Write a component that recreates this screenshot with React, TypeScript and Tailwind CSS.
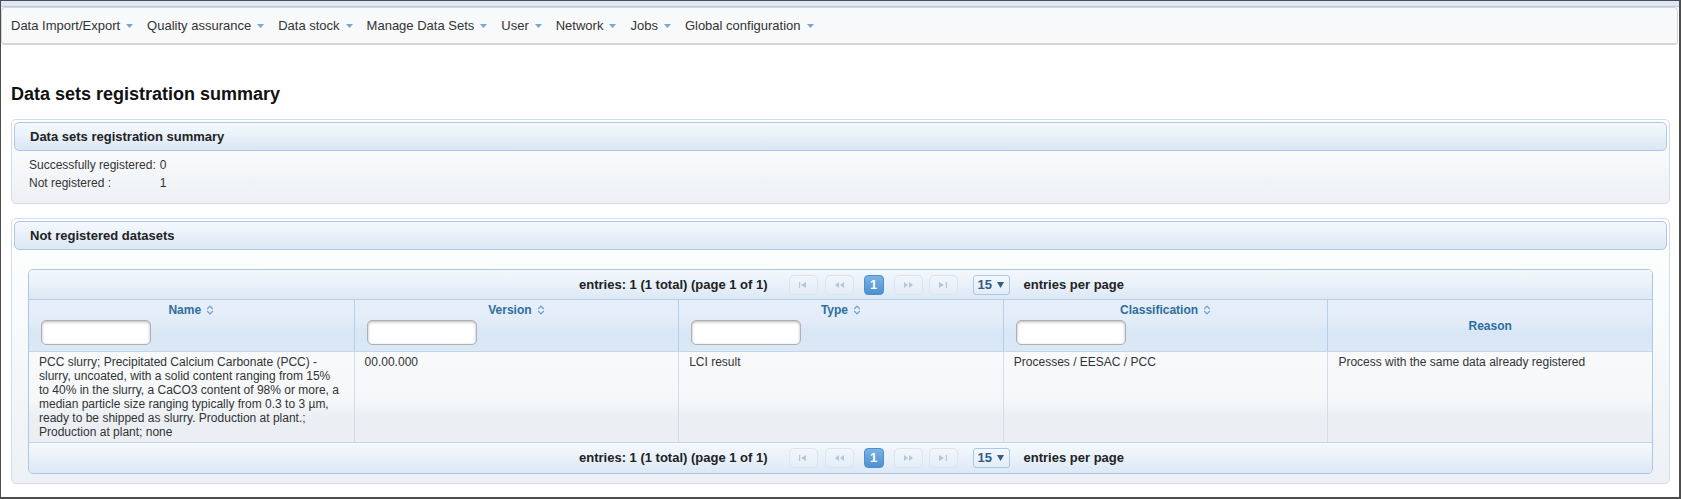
import React from 'react';

const menuItems = [
  'Data Import/Export',
  'Quality assurance',
  'Data stock',
  'Manage Data Sets',
  'User',
  'Network',
  'Jobs',
  'Global configuration',
];

const columns = [
  { label: 'Name', sortable: true },
  { label: 'Version', sortable: true },
  { label: 'Type', sortable: true },
  { label: 'Classification', sortable: true },
  { label: 'Reason', sortable: false },
];

const row = [
  'PCC slurry; Precipitated Calcium Carbonate (PCC) - slurry, uncoated, with a solid content ranging from 15% to 40% in the slurry, a CaCO3 content of 98% or more, a median particle size ranging typically from 0.3 to 3 µm, ready to be shipped as slurry. Production at plant.; Production at plant; none',
  '00.00.000',
  'LCI result',
  'Processes / EESAC / PCC',
  'Process with the same data already registered',
];

function Caret() {
  return (
    <svg width="7" height="4" viewBox="0 0 7 4" className="ml-[6px] mt-[1px]">
      <path d="M0 0h7L3.5 4z" fill="#7ba4cf" />
    </svg>
  );
}

function SortIcon() {
  return (
    <svg width="8" height="10" viewBox="0 0 8 10" className="ml-[5px]">
      <path d="M1.2 4 L4 1.2 L6.8 4 M1.2 6 L4 8.8 L6.8 6" fill="none" stroke="#6f9fd0" strokeWidth="1.2" />
    </svg>
  );
}

// paginator icons, drawn faint because the buttons are disabled
function SeekIcon({ kind }: { kind: 'first' | 'prev' | 'next' | 'end' }) {
  const paths: Record<string, string> = {
    first: 'M1 1h1.2v6H1z M8 1v6L3 4z',
    prev: 'M5 1v6L1 4z M10 1v6L6 4z',
    next: 'M1 1v6l4-3z M6 1v6l4-3z',
    end: 'M1 1v6l5-3z M7.8 1H9v6H7.8z',
  };
  return (
    <svg width="11" height="8" viewBox="0 0 11 8">
      <path d={paths[kind]} fill="#b3c7db" />
    </svg>
  );
}

function PageButton({ children, className = '' }: { children: React.ReactNode; className?: string }) {
  return (
    <div
      className={`h-[20px] w-[29px] flex items-center justify-center rounded-[5px] border border-[#d9e5f1] bg-[linear-gradient(to_bottom,#f1f6fb,#e4edf7)] ${className}`}
    >
      {children}
    </div>
  );
}

function Paginator({ bottom }: { bottom?: boolean }) {
  return (
    <div
      className={`flex items-center justify-center pl-[22px] bg-[linear-gradient(to_bottom,#f4f8fc_0%,#e9f1f9_50%,#dce8f5_100%)] ${
        bottom ? 'h-[31px] border-t border-[#c3d6ea]' : 'h-[29px]'
      }`}
    >
      <span className="text-[13px] font-bold text-[#222]">entries: 1 (1 total) (page 1 of 1)</span>
      <PageButton className="ml-[21px]">
        <SeekIcon kind="first" />
      </PageButton>
      <PageButton className="ml-[7px]">
        <SeekIcon kind="prev" />
      </PageButton>
      <div className="ml-[10px] h-[20px] w-[20px] flex items-center justify-center rounded-[4px] border border-[#4c8fcf] bg-[linear-gradient(to_bottom,#7ab3e6,#4d90d0)] text-[13px] font-bold text-white">
        1
      </div>
      <PageButton className="ml-[10px]">
        <SeekIcon kind="next" />
      </PageButton>
      <PageButton className="ml-[6px]">
        <SeekIcon kind="end" />
      </PageButton>
      <div className="ml-[15px] h-[20px] w-[37px] flex items-center pl-[4px] rounded-[3px] border border-[#a9c8e6] bg-[linear-gradient(to_bottom,#f4f8fc,#e2ecf7)]">
        <span className="text-[13px] font-bold text-[#2f5d8a]">15</span>
        <svg width="7" height="6" viewBox="0 0 7 6" className="ml-[5px]">
          <path d="M0 0h7L3.5 6z" fill="#2f5d8a" />
        </svg>
      </div>
      <span className="ml-[14px] text-[13px] font-bold text-[#222]">entries per page</span>
    </div>
  );
}

function PanelHeader({ title }: { title: string }) {
  return (
    <div className="h-[29px] flex items-center pl-[15px] rounded-[5px] border border-[#abc9e6] bg-[linear-gradient(to_bottom,#f5f9fd_0%,#e8f0f9_50%,#dbe7f5_100%)] text-[13px] font-bold text-[#222]">
      {title}
    </div>
  );
}

export default function App() {
  return (
    <div className="w-[1681px] h-[499px] overflow-hidden bg-white border-t border-l border-r-2 border-b-2 border-[#4d4d4d] font-['Liberation_Sans',Arial,sans-serif]">
      {/* top strip */}
      <div className="h-[6px] bg-[#dde8f4] border-b border-[#b6cbe4]" />

      {/* menu bar */}
      <div className="h-[38px] mr-[1px] flex items-center pl-[9px] rounded-[4px] border border-[#d6d6d6] border-b-2 bg-[#f8f9fa] text-[13px] text-[#333]">
        {menuItems.map((item, i) => (
          <div key={item} className={`flex items-center ${i > 0 ? 'ml-[14px]' : ''}`}>
            <span>{item}</span>
            <Caret />
          </div>
        ))}
      </div>

      <div className="pl-[10px] pr-[9px]">
        <h1 className="mt-[38px] mb-[14px] text-[18px] leading-[22px] font-bold text-[#111]">
          Data sets registration summary
        </h1>

        {/* summary panel */}
        <div className="p-[2px] rounded-[5px] border border-[#d5dce4] bg-[linear-gradient(to_bottom,#ffffff,#edf1f5)]">
          <PanelHeader title="Data sets registration summary" />
          <div className="pl-[15px] pt-[5px] pb-[9px] grid grid-cols-[auto_auto] justify-start gap-x-[4px] text-[12px] leading-[18px] text-[#333]">
            <span>Successfully registered:</span>
            <span>0</span>
            <span>Not registered :</span>
            <span>1</span>
          </div>
        </div>

        {/* not registered panel */}
        <div className="mt-[14px] p-[2px] rounded-[5px] border border-[#d5dce4] bg-[linear-gradient(to_bottom,#ffffff,#edf1f5)]">
          <PanelHeader title="Not registered datasets" />
          <div className="pt-[19px] pb-[7px] px-[14px]">
            <div className="rounded-[5px] border border-[#a9c8e6] overflow-hidden">
              <Paginator />

              {/* column headers */}
              <div className="grid grid-cols-5 h-[52px] border-t border-[#b5cfe8] bg-[linear-gradient(to_bottom,#e6eff9_0%,#e2ecf8_45%,#d8e6f5_60%,#dbe8f6_100%)]">
                {columns.map((col, i) => (
                  <div
                    key={col.label}
                    className={`flex flex-col text-[12px] font-bold text-[#2e6e9e] ${
                      i > 0 ? 'border-l border-[#b5cfe8]' : ''
                    } ${col.sortable ? 'pt-[3px]' : 'justify-center'}`}
                  >
                    <div className="flex items-center justify-center leading-[14px]">
                      <span>{col.label}</span>
                      {col.sortable && <SortIcon />}
                    </div>
                    {col.sortable && (
                      <input
                        type="text"
                        className="mt-[3px] ml-[12px] h-[25px] w-[110px] rounded-[5px] border border-[#b0b0b0] bg-white shadow-[inset_0_1px_3px_rgba(0,0,0,0.3)] outline-none"
                      />
                    )}
                  </div>
                ))}
              </div>

              {/* data row */}
              <div className="grid grid-cols-5 border-t border-[#c7d6e6] bg-[linear-gradient(to_bottom,#f8f9fb_0%,#f5f7f9_55%,#ebeff3_72%,#ebeff3_100%)]">
                {row.map((cell, i) => (
                  <div
                    key={i}
                    className={`pl-[10px] pr-[13px] pt-[3px] pb-[3px] text-[12px] leading-[14px] text-[#333] ${
                      i > 0 ? 'border-l border-[#d5dde6]' : ''
                    }`}
                  >
                    {cell}
                  </div>
                ))}
              </div>

              <Paginator bottom />
            </div>
          </div>
        </div>
      </div>
    </div>
  );
}
